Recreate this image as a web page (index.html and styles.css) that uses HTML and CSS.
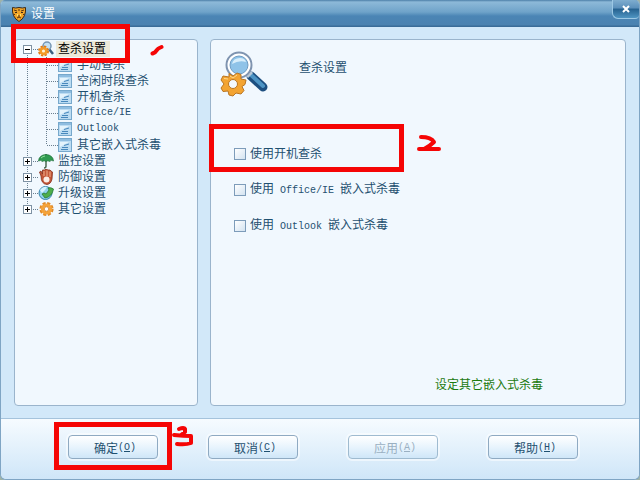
FILE: index.html
```
<!DOCTYPE html>
<html lang="zh-CN">
<head>
  <meta charset="UTF-8" />
  <meta name="viewport" content="width=device-width, initial-scale=1.0"/>
  <title>设置</title>
  <link rel="stylesheet" href="styles.css">
</head>
<body>

<div class="window">
  <header class="titlebar">
    <svg class="logo" viewBox="0 0 16 16">
      <path d="M1.500 1.500Q4.500 2.500 8 1.500Q11.500 2.500 14.500 1.500Q15.500 11 8 15.500Q.5 11 1.500 1.500Z" fill="#f0a428" stroke="#3c2a18"/>
      <path d="M3 4l3 1M13 4l-3 1M8 3v2M3 8l1 1M13 8l-1 1M6 12l2-1 2 1M8 9v2" stroke="#5a3410" fill="none"/>
      <path d="M4 6h2v1H4zM10 6h2v1h-2z" fill="#3c2a18"/>
      <path d="M6 8h1v2H6zM9 8h1v2H9z" fill="#ffe36a"/>
    </svg>
    <h1>设置</h1>
    <button class="close-button" aria-label="关闭">
      <svg viewBox="0 0 8 8"><path d="M1 1l6 6M7 1l-6 6" stroke="#fff" stroke-width="2"/></svg>
    </button>
  </header>

  <main class="content">
    <nav class="panel tree-panel">
      <ul class="tree">
        <li>
          <div class="tree-row">
            <button class="toggle" aria-label="折叠"><svg viewBox="0 0 9 9"><path d="M2 4.500h5" stroke="#000"/></svg></button>
            <span class="dash"></span>
            <svg class="icon" viewBox="0 0 16 16">
              <path d="M11 8l4 5" stroke="#3b5f80" stroke-width="2.500"/>
              <circle cx="9" cy="5" r="4" fill="#c3e2f6" stroke="#7797b4" stroke-width="1.500"/>
              <circle cx="5.500" cy="10" r="4.300" fill="none" stroke="#e07a14" stroke-width="2.400" stroke-dasharray="2.200 1.170"/>
              <circle cx="5.500" cy="10" r="2.800" fill="#fff3d8" stroke="#f39a28" stroke-width="2.500"/>
            </svg>
            <a class="label selected" href="#">查杀设置</a>
            <!-- 步骤 1 -->
            <span class="mark mark-tree"></span>
            <svg class="stroke stroke-one" viewBox="0 0 14 12"><path d="M2.500 9.500q3-1 4-3t5-3.500" /></svg>
          </div>
          <ul class="subtree">
            <li><span class="dash"></span><svg class="page-icon"><use href="#page"/></svg><a href="#">手动查杀</a></li>
            <li><span class="dash"></span><svg class="page-icon"><use href="#page"/></svg><a href="#">空闲时段查杀</a></li>
            <li><span class="dash"></span><svg class="page-icon"><use href="#page"/></svg><a href="#">开机查杀</a></li>
            <li><span class="dash"></span><svg class="page-icon"><use href="#page"/></svg><a href="#" class="latin">Office/IE</a></li>
            <li><span class="dash"></span><svg class="page-icon"><use href="#page"/></svg><a href="#" class="latin">Outlook</a></li>
            <li><span class="dash"></span><svg class="page-icon"><use href="#page"/></svg><a href="#">其它嵌入式杀毒</a></li>
          </ul>
        </li>
        <li>
          <div class="tree-row">
            <button class="toggle" aria-label="展开"><svg viewBox="0 0 9 9"><path d="M2 4.500h5M4.500 2v5" stroke="#000"/></svg></button>
            <span class="dash"></span>
            <svg class="icon" viewBox="0 0 16 16">
              <path d="M8 1v12q0 2-2 2" fill="none" stroke="#4a6a50" stroke-width="1.500"/>
              <path d="M.5 8Q1 2 8 1.500Q15 2 15.500 8Q13.500 6.500 11.500 8.500Q10 7 8 8.500Q6 7 4.500 8.500Q2.500 6.500.5 8Z" fill="#2f9a50" stroke="#1d7038" stroke-width=".7"/>
              <path d="M3 5q2-2 4-2" stroke="#8fe09a" fill="none"/>
            </svg>
            <a class="label" href="#">监控设置</a>
          </div>
        </li>
        <li>
          <div class="tree-row">
            <button class="toggle" aria-label="展开"><svg viewBox="0 0 9 9"><path d="M2 4.500h5M4.500 2v5" stroke="#000"/></svg></button>
            <span class="dash"></span>
            <svg class="icon" viewBox="0 0 16 16">
              <path d="M3 7L1.500 3 3 2l1.500 3V1h2l.5-.5h2l1 .5h2l1 1 1.500 1-.5 7q-1 5-5 5.500Q3 15 3 7Z" fill="#c4583a" stroke="#85301c" stroke-width=".8"/>
              <path d="M6 2v5M9 1.500V7M12 2.500V8" stroke="#f0b08c"/>
              <ellipse cx="8.500" cy="10.500" rx="3" ry="3" fill="#fbeee6"/>
            </svg>
            <a class="label" href="#">防御设置</a>
          </div>
        </li>
        <li>
          <div class="tree-row">
            <button class="toggle" aria-label="展开"><svg viewBox="0 0 9 9"><path d="M2 4.500h5M4.500 2v5" stroke="#000"/></svg></button>
            <span class="dash"></span>
            <svg class="icon" viewBox="0 0 16 16">
              <circle cx="7.500" cy="8" r="6.500" fill="#8fd2ee" stroke="#3482ac"/>
              <path d="M2 5q3-4 7-3L7 5 4 8Z" fill="#d5f2ff"/>
              <path d="M4 9l3 4Q14 12 15.500 4 13 2 10 3l1 2-3 4-2-1Z" fill="#4eae4a" stroke="#277a38" stroke-width=".8"/>
            </svg>
            <a class="label" href="#">升级设置</a>
          </div>
        </li>
        <li>
          <div class="tree-row">
            <button class="toggle" aria-label="展开"><svg viewBox="0 0 9 9"><path d="M2 4.500h5M4.500 2v5" stroke="#000"/></svg></button>
            <span class="dash"></span>
            <svg class="icon" viewBox="0 0 16 16">
              <circle cx="8.500" cy="8" r="5.800" fill="none" stroke="#e08a28" stroke-width="2.600" stroke-dasharray="3 1.550"/>
              <circle cx="8.500" cy="8" r="3.900" fill="#fff" stroke="#f5a33a" stroke-width="3.400"/>
              <circle cx="8.500" cy="8" r="2.200" fill="#fff" stroke="#cf7a1c" stroke-width=".7"/>
            </svg>
            <a class="label" href="#">其它设置</a>
          </div>
        </li>
      </ul>
    </nav>

    <section class="panel settings">
      <div class="settings-head">
        <svg class="big-icon" viewBox="0 0 50 50">
          <path d="M31 26l12 11" stroke="#1d4f80" stroke-width="9" stroke-linecap="round"/>
          <path d="M31 25l12 11" stroke="#4d94c4" stroke-width="4" stroke-linecap="round"/>
          <path d="M27 27l5-5" stroke="#b9c9d8" stroke-width="3"/>
          <circle cx="19" cy="15" r="12.500" fill="#fff" stroke="#7f94b0" stroke-width="2"/>
          <circle cx="19" cy="15" r="9" fill="#8fc3e8" stroke="#6f9cc2"/>
          <path d="M12 14q1-6 8-6 5 0 6 4-7-2-14 2Z" fill="#d8eefb"/>
          <path d="M9 23.500l4 2.500 4-3 4 1.500v4.500l5 1-1 4.500-3 2 2 4-3 3.500-5-1-3 3-4-1-1-4-5 .5L1 38l3-4-3-4 2-4 6 1Z" fill="#f3a432" stroke="#b97522" stroke-linejoin="round"/>
          <path d="M8 29l-4-.5M10 26l3 2 4-3" stroke="#ffd98c" fill="none"/>
          <circle cx="13" cy="34" r="4.500" fill="#f4f9fd" stroke="#b97522"/>
        </svg>
        <h2>查杀设置</h2>
      </div>

      <div class="options">
        <div class="option">
          <input type="checkbox" id="bootScan">
          <label for="bootScan">使用开机查杀</label>
          <!-- 步骤 2 -->
          <span class="mark mark-option"></span>
          <svg class="stroke stroke-two" viewBox="0 0 26 20"><path d="M5 4q10 0 13 5-4 4-10 7M3 16h20" /></svg>
        </div>
        <div class="option">
          <input type="checkbox" id="officeScan">
          <label for="officeScan">使用<span class="latin"> Office/IE </span>嵌入式杀毒</label>
        </div>
        <div class="option">
          <input type="checkbox" id="outlookScan">
          <label for="outlookScan">使用<span class="latin"> Outlook </span>嵌入式杀毒</label>
        </div>
      </div>

      <a class="more-link" href="#">设定其它嵌入式杀毒</a>
    </section>
  </main>

  <footer class="footer">
    <div class="button-box">
      <button class="btn">确定<span class="latin">(<u>O</u>)</span></button>
      <!-- 步骤 3 -->
      <span class="mark mark-ok"></span>
      <svg class="stroke stroke-three" viewBox="0 0 24 24"><path d="M8 5q5-2 6 0v3l-4 3M3 11q10 1 17 1v7q-5 2-14 1" /></svg>
    </div>
    <button class="btn">取消<span class="latin">(<u>C</u>)</span></button>
    <button class="btn" disabled>应用<span class="latin">(<u>A</u>)</span></button>
    <button class="btn">帮助<span class="latin">(<u>H</u>)</span></button>
  </footer>
</div>

<svg class="defs">
  <symbol id="page" viewBox="0 0 14 14">
    <rect x=".5" y=".5" width="13" height="13" fill="#bcdcf2" stroke="#76a8cc"/>
    <path d="M1 1h12v2H1z" fill="#8fbde0"/>
    <path d="M2 4h9L2 9z" fill="#e4f3fc"/>
    <path d="M6 7.500l5-1.500M4 9.500h6M3 11.500h7" stroke="#4888bc"/>
  </symbol>
</svg>

</body>
</html>
```
FILE: styles.css
```
* {
  box-sizing: border-box;
}

body {
  margin: 0;
  background-color: #9fb3a8;
  font-family: "Liberation Sans", "Noto Sans CJK SC", sans-serif;
  font-size: 12px;
  line-height: 16px;
  color: #1f5070;
}

h1, h2, ul {
  margin: 0;
  padding: 0;
  font-size: 12px;
  font-weight: normal;
}

ul {
  list-style: none;
}

a {
  color: inherit;
  text-decoration: none;
}

.defs {
  position: absolute;
  width: 0;
  height: 0;
}

/* 英文等宽字体 */
.latin {
  font-family: "Liberation Mono", monospace;
  font-size: 10px;
  white-space: pre;
}

.window {
  display: flex;
  flex-direction: column;
  min-height: 100vh;
  border: 1px solid #7fa5c4;
  border-top: none;
  border-radius: 5px 5px 6px 6px;
  background-color: #d2e8f9;
  overflow: hidden;
}

.titlebar {
  display: flex;
  align-items: center;
  height: 27px;
  padding-left: 10px;
  gap: 4px;
  color: white;
  background: linear-gradient(#4c7fa8 0, #8db9d8 2px, #6fa3c9 12px, #4b85b5 16px, #4b82b0 25px, #3a6c98 26px);
}

.logo {
  width: 16px;
  height: 16px;
}

.close-button {
  display: flex;
  align-items: center;
  justify-content: center;
  align-self: flex-start;
  width: 27px;
  height: 19px;
  margin-left: auto;
  padding: 0;
  border: 1px solid #9cc8e4;
  border-top: none;
  border-right: none;
  border-radius: 0 0 4px 6px;
  background: linear-gradient(#7fadcf, #5a8fba 45%, #26618f 50%, #4f95c2);
}

.close-button svg {
  width: 8px;
  height: 8px;
}

.content {
  display: flex;
  flex: 1;
  gap: 12px;
  padding: 12px 13px;
}

.panel {
  border: 1px solid #9ab4cc;
  border-radius: 4px;
  background-color: #f1f8fe;
}

.tree-panel {
  flex: 0 0 184px;
  padding-top: 1px;
}

/* 树形菜单的虚线 */
.tree > li,
.subtree li {
  background: repeating-linear-gradient(#6a7f90 0 1px, transparent 1px 2px) no-repeat;
  background-size: 1px 100%;
}

.tree > li {
  background-position: 12px 0;
}

.tree > li:first-child {
  background-position: 12px 8px;
}

.tree > li:last-child,
.subtree li:last-child {
  background-size: 1px 8px;
}

.tree-row {
  position: relative;
  display: flex;
  align-items: center;
  height: 16px;
  padding-left: 8px;
}

.toggle {
  width: 9px;
  height: 9px;
  padding: 0;
  border: 1px solid #7e92a4;
  background-color: white;
}

.toggle svg {
  display: block;
  width: 9px;
  height: 9px;
  margin: -1px;
}

.dash {
  width: 6px;
  height: 1px;
  background: repeating-linear-gradient(90deg, transparent 0 1px, #6a7f90 1px 2px);
}

.icon {
  width: 16px;
  height: 16px;
}

.label {
  margin-left: 2px;
  padding: 0 4px 0 2px;
}

.label.selected {
  color: #000;
  background-color: #ece9d8;
}

.subtree {
  margin-left: 31px;
}

.subtree li {
  display: flex;
  align-items: center;
  height: 16px;
}

.subtree .dash {
  width: 12px;
}

.page-icon {
  width: 14px;
  height: 14px;
  margin-right: 5px;
}

.settings {
  display: flex;
  flex: 1;
  flex-direction: column;
  padding: 10px 82px 12px 9px;
}

.settings-head {
  display: flex;
  gap: 29px;
}

.big-icon {
  width: 50px;
  height: 50px;
}

.settings-head h2 {
  margin-top: 10px;
}

.options {
  display: flex;
  flex-direction: column;
  gap: 20px;
  margin-top: 46px;
  padding-left: 14px;
}

.option {
  position: relative;
  display: flex;
  align-items: center;
  gap: 4px;
  height: 16px;
}

.option input {
  appearance: none;
  width: 12px;
  height: 12px;
  margin: 0;
  border: 1px solid #7d9cba;
  background: linear-gradient(135deg, #fff, #d3e3f1);
}

.option input:checked {
  background: #4b85b5;
}

.more-link {
  align-self: flex-end;
  margin-top: auto;
  color: #1c7a10;
}

.footer {
  display: flex;
  align-items: center;
  justify-content: center;
  gap: 50px;
  height: 61px;
  padding: 0 0 4px 6px;
  border-top: 1px solid #a5c3dc;
  background: linear-gradient(#f6fbff, #cfe6f8);
}

.button-box {
  position: relative;
}

.btn {
  display: flex;
  align-items: center;
  justify-content: center;
  width: 90px;
  height: 24px;
  padding: 0 0 0 4px;
  border: 1px solid #8faac2;
  border-radius: 4px;
  outline: 2px solid rgba(255, 255, 255, 0.5);
  background: linear-gradient(#fff, #e8f4fd 50%, #cfe6f8);
  color: #1f5070;
  font-family: inherit;
  font-size: 12px;
}

.btn:disabled {
  border-color: #9fbbd0;
  color: #9ab0c2;
}

/* 红色标注 */
.mark {
  position: absolute;
  border: 5px solid #f50505;
  pointer-events: none;
  z-index: 1;
}

.mark-tree {
  top: -17px;
  left: -4px;
  width: 119px;
  height: 39px;
}

.mark-option {
  top: -22px;
  left: -25px;
  width: 195px;
  height: 48px;
}

.mark-ok {
  top: -13px;
  left: -14px;
  width: 118px;
  height: 48px;
}

.stroke {
  position: absolute;
  fill: none;
  stroke: #f50505;
  stroke-width: 4;
  stroke-linecap: round;
  stroke-linejoin: round;
}

.stroke-one {
  top: 3px;
  left: 135px;
  width: 14px;
  height: 12px;
}

.stroke-two {
  top: -13px;
  left: 182px;
  width: 26px;
  height: 20px;
}

.stroke-three {
  top: -11px;
  left: 103px;
  width: 24px;
  height: 24px;
}
```
